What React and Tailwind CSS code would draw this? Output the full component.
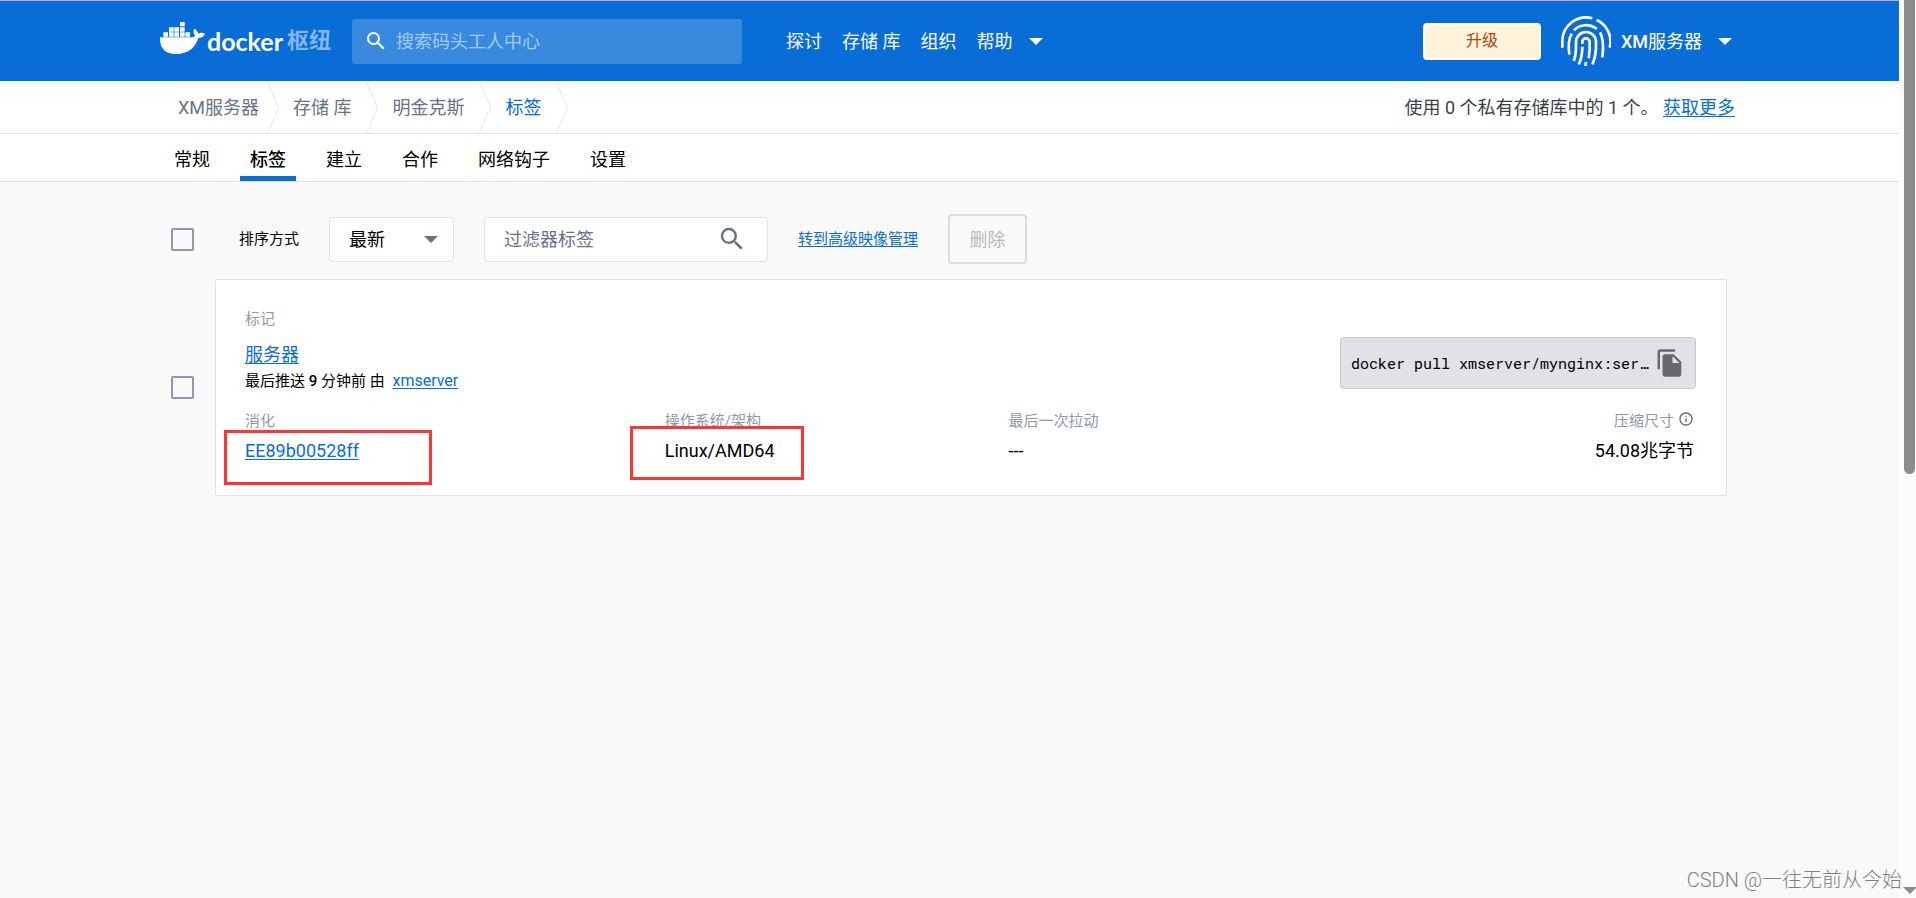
import React from "react";
import { MdSearch, MdFileCopy, MdInfoOutline } from "react-icons/md";

function Whale() {
  return (
    <svg viewBox="0 0 135 96" className="mb-[6px] h-8 w-[45px] shrink-0" fill="#fff" aria-hidden="true">
      <path d="M10 31h14v13H10zM27 31h14v13H27zM43 31h14v13H43zM60 31h14v13H60zM76 31h14v13H76zM27 16h14v13H27zM43 16h14v13H43zM60 16h14v13H60zM60 0h14v13H60z" />
      <path d="M0 46H96C103 46 106 43 104 39C99 32 99 25 104 20C110 24 113 29 114 35C122 31 130 32 135 36C131 44 124 48 115 48C106 76 86 96 48 96C16 96 0 78 0 50Z" />
    </svg>
  );
}

function Fingerprint() {
  return (
    <svg viewBox="0 0 150 150" className="h-[50px] w-[50px] shrink-0" fill="none" stroke="#fff" strokeWidth="8" aria-hidden="true">
      <path d="M4 95V75A71 71 0 0 1 94 7" />
      <path d="M107 12A71 71 0 0 1 146 95" />
      <path d="M39 43A50 50 0 0 1 107 39" />
      <path d="M32 53C22 70 21 88 25 116" />
      <path d="M117 49C128 68 128 94 124 124" />
      <path d="M38 135C46 118 45 100 45 78A30 30 0 0 1 105 78C106 106 104 124 94 145" />
      <path d="M53 145C62 128 64 112 64 92" />
      <path d="M64 84V78A11 11 0 0 1 86 78C87 96 86 110 83 127" />
      <path d="M75 138L73 150" />
    </svg>
  );
}

function Caret({ className }) {
  return (
    <svg viewBox="0 0 14 7" className={"h-[7px] w-[14px] shrink-0 " + className} fill="currentColor" aria-hidden="true">
      <path d="M0 0h14L7 7z" />
    </svg>
  );
}

function Chevron() {
  return (
    <svg viewBox="0 0 12 51" className="h-[51px] w-3 shrink-0" fill="none" stroke="#e6e6e6" aria-hidden="true">
      <path d="M0.5 0L11.5 25.5L0.5 51" />
    </svg>
  );
}

const tabs = ["常规", "标签", "建立", "合作", "网络钩子", "设置"];
const link = "text-[#086dd7] underline underline-offset-2";
const box =
  "block h-[23px] w-[23px] shrink-0 appearance-none rounded-[2px] border-2 border-[#8f98ad] bg-[#f9f9f9]";

export default function App() {
  return (
    <div className="relative flex min-h-screen bg-[#f9f9f9] font-[Roboto,'Noto_Sans_CJK_SC',sans-serif] text-[18px] text-black">
      <div className="min-w-0 flex-1">
        <header className="border-t border-[#c9a5f7] bg-[#086dd7] text-white">
          <div className="mx-auto flex h-20 max-w-[1579px] items-center">
            <a href="#home" className="flex items-center">
              <Whale />
              <span className="ml-[2px] font-[Lato,sans-serif] text-[25px] leading-8 font-bold">docker</span>
              <span className="ml-1 text-[22px] leading-8 font-bold text-[#84b6eb]">枢纽</span>
            </a>
            <label className="ml-[21px] flex h-[45px] w-[390px] items-center rounded-[3px] bg-[#3989df] pl-3">
              <MdSearch className="h-6 w-6" aria-hidden="true" />
              <input
                type="search"
                aria-label="搜索码头工人中心"
                placeholder="搜索码头工人中心"
                className="ml-2 min-w-0 flex-1 bg-transparent outline-none placeholder:text-[#a5caf1]"
              />
            </label>
            <nav className="ml-[44px] flex items-center gap-5">
              <a href="#explore">探讨</a>
              <a href="#repositories">存储 库</a>
              <a href="#organizations">组织</a>
              <button type="button" className="flex items-center gap-[17px]">
                帮助
                <Caret className="" />
              </button>
            </nav>
            <div className="ml-auto flex items-center pr-[7px]">
              <button type="button" className="h-[37px] w-[118px] rounded border-2 border-white bg-[#fff3dc] text-base text-[#a8480f]">
                升级
              </button>
              <button type="button" className="ml-5 flex items-center font-medium">
                <Fingerprint />
                <span className="ml-[10px]">
                  XM<span className="font-normal">服务器</span>
                </span>
                <Caret className="ml-4" />
              </button>
            </div>
          </div>
        </header>

        <div className="border-b border-[#e0e0e0] bg-white">
          <div className="mx-auto flex h-[52px] max-w-[1579px] items-center pr-1 pl-[18px]">
            <nav className="flex items-center text-[#677285]">
              <a href="#user" className="mr-2">XM服务器</a>
              <Chevron />
              <a href="#repos" className="mr-[15px] ml-[14px]">存储 库</a>
              <Chevron />
              <a href="#repo" className="mr-[15px] ml-[14px]">明金克斯</a>
              <Chevron />
              <a href="#tags" className="mr-[15px] ml-[14px] text-[#086dd7]">标签</a>
              <Chevron />
            </nav>
            <p className="ml-auto text-[#393f49]">
              使用 0 个私有存储库中的 1 个。 <a href="#more" className={link}>获取更多</a>
            </p>
          </div>
        </div>

        <div className="border-b border-[#e0e0e0] bg-white">
          <nav className="mx-auto flex h-[47px] max-w-[1579px] gap-5 pl-1">
            {tabs.map((t) => (
              <a
                key={t}
                href={"#" + t}
                className={
                  "flex items-center border-b-[5px] px-[10px] pt-2 " +
                  (t === "标签" ? "border-[#086dd7] font-medium" : "border-transparent")
                }
              >
                {t}
              </a>
            ))}
          </nav>
        </div>

        <main className="mx-auto max-w-[1579px] pt-8 pr-3 pl-[11px]">
          <div className="flex h-[50px] items-center">
            <input type="checkbox" aria-label="全选" className={box} />
            <label htmlFor="sort" className="ml-[45px] text-[15px]">排序方式</label>
            <div className="relative ml-[30px] h-[45px] w-[125px]">
              <select
                id="sort"
                className="h-full w-full appearance-none rounded border border-[#e1e2e6] bg-white pl-[19px] outline-none"
              >
                <option>最新</option>
              </select>
              <Caret className="pointer-events-none absolute top-[19px] right-4 text-[#677285]" />
            </div>
            <label className="ml-[30px] flex h-[45px] w-[284px] items-center rounded border border-[#e1e2e6] bg-white pr-5 pl-[19px]">
              <input
                type="text"
                aria-label="过滤器标签"
                placeholder="过滤器标签"
                className="min-w-0 flex-1 bg-transparent outline-none placeholder:text-[#677285]"
              />
              <MdSearch className="h-[30px] w-[30px] text-[#677285]" aria-hidden="true" />
            </label>
            <a href="#advanced" className={"ml-[30px] text-[15px] " + link}>转到高级映像管理</a>
            <button type="button" disabled className="ml-[30px] h-[50px] w-[79px] rounded border-2 border-[#dbdbdb] text-[#b9b9b9]">
              删除
            </button>
          </div>

          <div className="mt-[15px] flex items-center gap-[21px]">
            <input type="checkbox" aria-label="服务器" className={box} />
            <article className="relative min-w-0 flex-1 rounded-[2px] border border-[#e1e2e6] bg-white pt-[29px] pr-[30px] pb-[30px] pl-[29px]">
              <div className="flex items-end justify-between">
                <div>
                  <p className="text-[15px] leading-5 text-[#8f98ad]">标记</p>
                  <p className="mt-3 leading-7">
                    <a href="#server" className={link}>服务器</a>
                  </p>
                  <p className="text-[15px] leading-6">
                    最后推送 <span className="font-medium">9</span> 分钟前 由 <a href="#xmserver" className={"ml-1 text-base leading-6 " + link}>xmserver</a>
                  </p>
                </div>
                <div className="mb-1 flex h-[52px] w-[356px] items-center rounded border border-[#c4c8d1] bg-[#e1e2e6] pl-[10px]">
                  <code className="font-['Roboto_Mono','Liberation_Mono',monospace] text-[15px]">docker pull xmserver/mynginx:ser…</code>
                  <button type="button" aria-label="复制" className="ml-[7px] shrink-0">
                    <MdFileCopy className="h-[30px] w-[30px] text-[#67686a]" />
                  </button>
                </div>
              </div>
              <dl className="mt-[18px] grid grid-cols-[420fr_344fr_343fr_343fr] pr-[2px]">
                <div>
                  <dt className="text-[15px] leading-5 text-[#8f98ad]">消化</dt>
                  <dd className="mt-[6px] leading-7">
                    <a href="#digest" className={link}>EE89b00528ff</a>
                  </dd>
                </div>
                <div>
                  <dt className="text-[15px] leading-5 text-[#8f98ad]">操作系统/架构</dt>
                  <dd className="mt-[6px] leading-7">Linux/AMD64</dd>
                </div>
                <div>
                  <dt className="text-[15px] leading-5 text-[#8f98ad]">最后一次拉动</dt>
                  <dd className="mt-[6px] leading-7">---</dd>
                </div>
                <div className="text-right">
                  <dt className="flex items-start justify-end gap-1 text-[15px] leading-5 text-[#8f98ad]">
                    压缩尺寸
                    <MdInfoOutline className="h-4 w-4 text-[#67686a]" aria-hidden="true" />
                  </dt>
                  <dd className="mt-[6px] leading-7">54.08兆字节</dd>
                </div>
              </dl>
              <div className="pointer-events-none absolute top-[150px] left-2 h-[55px] w-[208px] border-[3px] border-[#fc3634]" />
              <div className="pointer-events-none absolute top-[146px] left-[414px] h-[54px] w-[174px] border-[3px] border-[#fc3634]" />
            </article>
          </div>
        </main>
      </div>

      <div className="flex w-[17px] shrink-0 flex-col items-center bg-[#fcfcfc] pl-1" aria-hidden="true">
        <div className="h-[474px] w-[11px] rounded-b-full bg-[#8b8b8b]" />
        <Caret className="mt-auto mb-1 text-[#8b8b8b]" />
      </div>
      <p className="absolute right-[14px] bottom-1 text-xl leading-7 font-light text-[#808080]">CSDN @一往无前从今始</p>
    </div>
  );
}
